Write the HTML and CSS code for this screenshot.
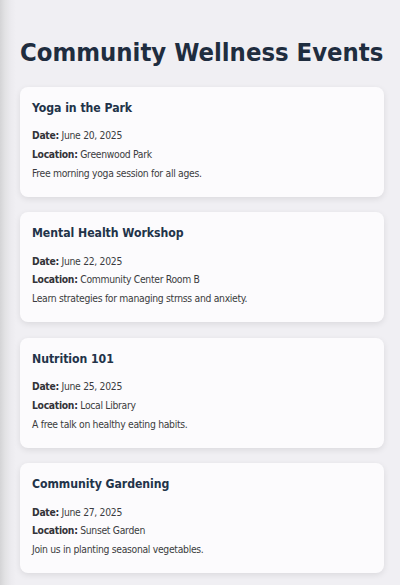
FILE: index.html
```html
<!DOCTYPE html>
<html lang="en">
<head>
<meta charset="utf-8">
<title>Community Wellness Events</title>
<link rel="stylesheet" href="styles.css">
</head>
<body>
  <main class="page">
    <h1 class="page-title">Community Wellness Events</h1>
    <section class="events">
      <article class="event-card">
        <h3 class="event-title">Yoga in the Park</h3>
        <p class="event-line"><strong>Date:</strong> June 20, 2025</p>
        <p class="event-line"><strong>Location:</strong> Greenwood Park</p>
        <p class="event-line">Free morning yoga session for all ages.</p>
      </article>
      <article class="event-card">
        <h3 class="event-title">Mental Health Workshop</h3>
        <p class="event-line"><strong>Date:</strong> June 22, 2025</p>
        <p class="event-line"><strong>Location:</strong> Community Center Room B</p>
        <p class="event-line">Learn strategies for managing strnss and anxiety.</p>
      </article>
      <article class="event-card">
        <h3 class="event-title">Nutrition 101</h3>
        <p class="event-line"><strong>Date:</strong> June 25, 2025</p>
        <p class="event-line"><strong>Location:</strong> Local Library</p>
        <p class="event-line">A free talk on healthy eating habits.</p>
      </article>
      <article class="event-card">
        <h3 class="event-title">Community Gardening</h3>
        <p class="event-line"><strong>Date:</strong> June 27, 2025</p>
        <p class="event-line"><strong>Location:</strong> Sunset Garden</p>
        <p class="event-line">Join us in planting seasonal vegetables.</p>
      </article>
    </section>
  </main>
</body>
</html>
```
FILE: styles.css
```css
html {
  background: linear-gradient(to right, #d4d4d6 0, #e2e2e4 5px, #ecebef 11px, #f0eff3 16px);
  min-height: 100%;
}
body {
  margin: 0;
  font-family: "DejaVu Sans Condensed", "DejaVu Sans", sans-serif;
  font-stretch: condensed;
  color: #3a3a3f;
}
.page {
  padding: 36px 16px 20px 20px;
}
.page-title {
  margin: 0 0 19px 0;
  font-size: 25.4px;
  line-height: 32px;
  font-weight: bold;
  color: #1f2d3f;
  white-space: nowrap;
}
.events {
  display: flex;
  flex-direction: column;
  gap: 15.5px;
}
.event-card {
  background: #fcfbfd;
  border-radius: 8px;
  box-shadow: 0 2px 6px rgba(0, 0, 0, 0.09);
  padding: 13px 12px 14.8px 12px;
}
.event-title {
  margin: 0 0 10.4px 0;
  font-size: 12.2px;
  line-height: 16px;
  font-weight: bold;
  color: #223349;
  letter-spacing: -0.05px;
}
.event-line {
  margin: 0;
  font-size: 10.3px;
  line-height: 18.6px;
  letter-spacing: -0.3px;
  color: #3b3b40;
}
.event-line strong {
  color: #333338;
}
```
